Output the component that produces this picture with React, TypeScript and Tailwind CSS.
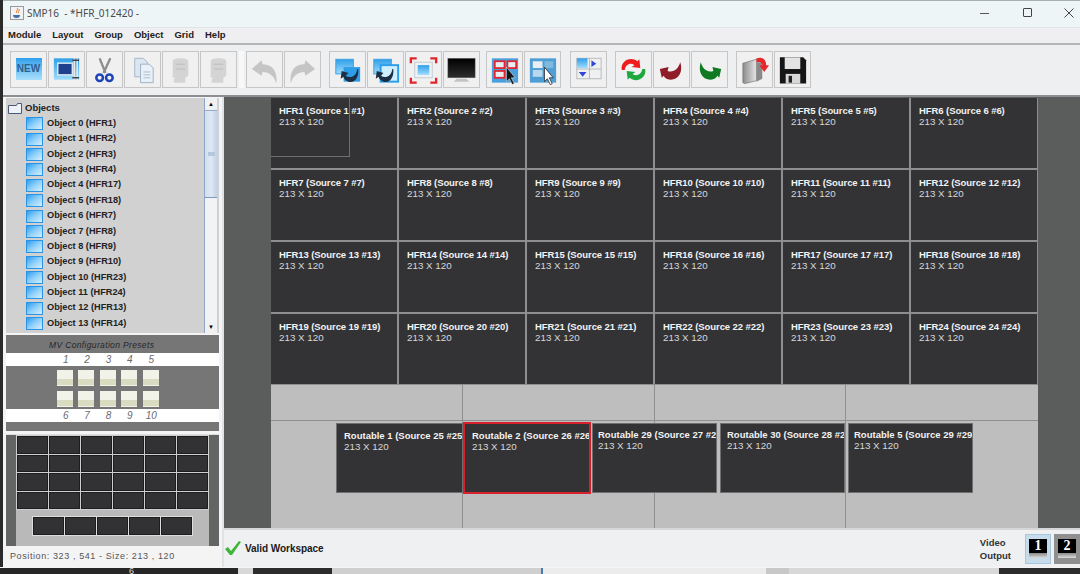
import React from "react";

const font = "[font-family:'Liberation_Sans',Arial,sans-serif]";

function Defs() {
  return (
    <svg className="absolute w-0 h-0" aria-hidden="true">
      <defs>
        <linearGradient id="blue" x1="0" y1="0" x2="0" y2="1">
          <stop offset="0" stopColor="#2f9fe8" />
          <stop offset="1" stopColor="#9fdcfb" />
        </linearGradient>
        <linearGradient id="gray" x1="0" y1="0" x2="1" y2="0">
          <stop offset="0" stopColor="#8a8a8a" />
          <stop offset="1" stopColor="#e8e8e8" />
        </linearGradient>
        <linearGradient id="mon" x1="0" y1="0" x2="0" y2="1">
          <stop offset="0" stopColor="#000" />
          <stop offset="1" stopColor="#2e2e2e" />
        </linearGradient>
      </defs>
    </svg>
  );
}

const Svg = ({ children }: { children: React.ReactNode }) => (
  <svg viewBox="0 0 36 36" className="w-[36px] h-[36px]">
    {children}
  </svg>
);

const darkArrow = "M12 25c5 3 11 1 12-7l1 0c1 9-4 15-10 13-3-1-5-3-5-5l-3 2 1-8 7 2z";

const Icons: Record<string, React.ReactNode> = {
  new: (
    <div className={`w-[26px] h-[22px] mb-[2px] bg-linear-to-b from-[#2c9fec] to-[#a8dffb] flex items-center justify-center text-[10px] font-bold text-[#2d5f8e] ${font}`}>
      NEW
    </div>
  ),
  edit: (
    <Svg>
      <rect x="5" y="6" width="26" height="22" fill="url(#blue)" />
      <rect x="9" y="11" width="15" height="12" fill="#1f3f8f" stroke="#d9e8f2" strokeWidth="1.5" />
      <path d="M26 6v22M29 6v22" stroke="#e8e8e8" strokeWidth="1.6" />
      <path d="M24 8h7M24 26h7" stroke="#444" strokeWidth="1.6" />
    </Svg>
  ),
  cut: (
    <Svg>
      <path d="M13 6l6 15M24 6l-7 15" stroke="#8d8d8d" strokeWidth="2.4" fill="none" />
      <circle cx="13" cy="26" r="3.4" fill="none" stroke="#1d45b8" strokeWidth="2.6" />
      <circle cx="23" cy="26" r="3.4" fill="none" stroke="#1d45b8" strokeWidth="2.6" />
    </Svg>
  ),
  copy: (
    <Svg>
      <path d="M10 6h9l4 4v15H10z" fill="#dbe6f0" stroke="#a5b5c5" />
      <path d="M16 12h9l4 4v15H16z" fill="#e9f0f7" stroke="#9fb2c5" />
      <path d="M19 20h7M19 23h7M19 26h7" stroke="#a9bccd" />
    </Svg>
  ),
  disA: (
    <Svg>
      <path d="M10 9c0-2 3-3 8-3s8 1 8 3v15l-3 2v5H11v-4l3-1h-4z" fill="#d4d4d4" />
      <path d="M13 12h10M13 17h10" stroke="#c4c4c4" strokeWidth="1.5" />
    </Svg>
  ),
  undo: (
    <Svg>
      <path d="M5 17l10-9 1 4c9 0 16 6 14 20-2-8-7-12-14-12l-1 4z" fill="#c5c5c5" />
    </Svg>
  ),
  redo: (
    <Svg>
      <path d="M31 17l-10-9-1 4c-9 0-16 6-14 20 2-8 7-12 14-12l1 4z" fill="#c5c5c5" />
    </Svg>
  ),
  front: (
    <Svg>
      <rect x="6" y="7" width="18" height="15" fill="url(#blue)" stroke="#3aa0e6" />
      <rect x="14" y="15" width="17" height="15" fill="#2e9ee6" />
      <path d={darkArrow} fill="#1d2f45" transform="translate(4 -1)" />
    </Svg>
  ),
  back: (
    <Svg>
      <rect x="6" y="7" width="18" height="15" fill="url(#blue)" stroke="#3aa0e6" />
      <rect x="13" y="13" width="18" height="17" fill="#cfeeff" stroke="#2e9ee6" strokeWidth="2" />
      <path d={darkArrow} fill="#1d2f45" transform="translate(1 -1)" />
    </Svg>
  ),
  fit: (
    <Svg>
      <path d="M5 11V6h6M31 11V6h-6M5 26v5h6M31 26v5h-6" fill="none" stroke="#e0262c" strokeWidth="2.4" />
      <rect x="9" y="10" width="18" height="16" fill="#eef2f4" stroke="#c4cad0" />
      <rect x="12" y="13" width="12" height="10" fill="url(#blue)" />
    </Svg>
  ),
  monitor: (
    <Svg>
      <rect x="4" y="6" width="28" height="20" fill="url(#mon)" stroke="#666" strokeWidth="0.5" />
      <path d="M13 27h10l3 3H10z" fill="#c3c3c3" />
    </Svg>
  ),
  selRed: (
    <Svg>
      <rect x="5" y="6" width="27" height="25" fill="#4aa0dc" />
      <rect x="8" y="9" width="10" height="7" fill="#e6eef4" stroke="#e2242c" strokeWidth="1.8" />
      <rect x="21" y="9" width="9" height="7" fill="#e6eef4" stroke="#e2242c" strokeWidth="1.8" />
      <rect x="8" y="19" width="10" height="7" fill="#e6eef4" stroke="#e2242c" strokeWidth="1.8" />
      <path d="M20 15l0 15 3-3 3 6 2-1-3-6 4 0z" fill="#151515" stroke="#fff" strokeWidth="0.5" />
    </Svg>
  ),
  selBlue: (
    <Svg>
      <rect x="5" y="6" width="27" height="25" fill="#4f9fd6" />
      <rect x="8" y="9" width="10" height="7" fill="#e8eef2" />
      <rect x="8" y="18" width="10" height="7" fill="#b9d8ec" />
      <rect x="20" y="9" width="9" height="7" fill="#7fb9de" />
      <path d="M20 15l0 15 3-3 3 6 2-1-3-6 4 0z" fill="#fff" stroke="#222" strokeWidth="0.8" />
    </Svg>
  ),
  layout: (
    <Svg>
      <rect x="6" y="6" width="25" height="21" fill="#eef0f2" stroke="#b9b9b9" />
      <path d="M19 6v21M6 17h25" stroke="#b9b9b9" />
      <rect x="6" y="6" width="11" height="10" fill="url(#blue)" />
      <path d="M21 8l5 3.5-5 3.5zM8 20h8l-4 5z" fill="#3246d8" />
    </Svg>
  ),
  sync: (
    <Svg>
      <path d="M6 18c-2-9 9-15 16-9l2-2 1 9-9-1 3-2c-4-3-9-1-10 5z" fill="#ee1c1c" />
      <path d="M30 17c2 9-9 15-16 9l-2 2-1-9 9 1-3 2c4 3 9 1 10-5z" fill="#1fa83e" />
    </Svg>
  ),
  down: (
    <Svg>
      <path d="M6 17l9-2-1 4c6 2 11-2 13-9 3 9-1 18-10 18-4 0-6-2-7-4l-2 2z" fill="#8f1c28" />
    </Svg>
  ),
  up: (
    <Svg>
      <path d="M30 17l-9-2 1 4c-6 2-11-2-13-9-3 9 1 18 10 18 4 0 6-2 7-4l2 2z" fill="#0f7a22" />
    </Svg>
  ),
  open: (
    <Svg>
      <path d="M6 11l14-4v22l-12 3-2-1z" fill="url(#gray)" stroke="#666" strokeWidth="0.6" />
      <path d="M20 10h6v17l-6 3z" fill="#8a8a8a" />
      <path d="M20 6c6-2 10 1 10 7h3l-5 7-5-7h3c0-2-2-4-6-3z" fill="#e8262a" />
    </Svg>
  ),
  save: (
    <Svg>
      <path d="M5 5h24l3 3v24H5z" fill="#161616" />
      <rect x="10" y="5" width="16" height="12" fill="#e4e4e4" />
      <rect x="11" y="22" width="15" height="10" fill="#d8d8d8" />
      <rect x="14" y="24" width="3.5" height="7" fill="#222" />
    </Svg>
  ),
};

const Btn = ({ icon }: { icon: string }) => (
  <div className="w-[37px] h-[37px] border border-[#c6c6c6] bg-[#f0f0f1] flex items-center justify-center shrink-0">
    {Icons[icon]}
  </div>
);

const Group = ({ icons, gap }: { icons: string[]; gap: string }) => (
  <div className={`flex gap-[1px] ${gap}`}>
    {icons.map((i, n) => (
      <Btn key={n} icon={i} />
    ))}
  </div>
);

const objects = ["HFR1", "HFR2", "HFR3", "HFR4", "HFR17", "HFR18", "HFR7", "HFR8", "HFR9", "HFR10", "HFR23", "HFR24", "HFR13", "HFR14"];

const ObjIcon = () => (
  <div className="w-[17px] h-[13px] mr-[4px] bg-linear-to-br from-[#1f9ef0] via-[#8ed0fa] to-[#d4eefe] border border-[#2a93e4] shrink-0" />
);

function Tree() {
  return (
    <div className="h-[235px] mx-[3px] bg-[#d1d1d2] flex overflow-hidden relative">
      <div className="flex-1 pl-[2px] pt-[3px] overflow-hidden">
        <div className="flex items-center h-[15px] text-[9.5px] font-bold text-[#222]">
          <svg viewBox="0 0 14 11" className="w-[14px] h-[11px] mr-[3px]">
            <path d="M0.5 2.5h8l1-2h4v10h-13z" fill="#eef1f7" stroke="#4a5a78" />
          </svg>
          Objects
        </div>
        {objects.map((o, i) => (
          <div key={i} className="flex items-center h-[15.4px] pl-[18px] text-[9.2px] font-bold text-[#222] whitespace-nowrap">
            <ObjIcon />
            Object {i} ({o})
          </div>
        ))}
        <div className="flex items-center h-[15.4px] pl-[18px]">
          <ObjIcon />
        </div>
      </div>
      <div className="w-[13px] mr-[2px] flex flex-col bg-[#f2f3f4] border-l border-[#8fa5c8] shrink-0">
        <div className="h-[13px] bg-[#f0f1f3] flex items-center justify-center text-[6px] text-black border-b border-[#9aaac4]">▲</div>
        <div className="h-[87px] bg-linear-to-r from-[#cfdfee] via-[#dfe9f4] to-[#bfd2e6] border-b border-[#7f96bd] flex items-center justify-center">
          <div className="w-[7px] h-[4px] bg-[#b6c7db]" />
        </div>
        <div className="flex-1" />
        <div className="h-[11px] bg-[#f0f1f3] flex items-center justify-center text-[6px] text-black">▼</div>
      </div>
    </div>
  );
}

const PresetBtn = () => (
  <div className="w-[16px] h-[16px] bg-[#f2f3e8] flex flex-col justify-end">
    <div className="h-[6px] mb-[1px] bg-[#d9dcc0]" />
  </div>
);

const NumRow = ({ nums }: { nums: number[] }) => (
  <div className="h-[13px] bg-white flex pl-[49px] text-[10px] italic text-[#6c6c6c]">
    {nums.map((n) => (
      <div key={n} className="w-[21.4px] text-center leading-[13px]">{n}</div>
    ))}
  </div>
);

function Presets() {
  return (
    <div className="mt-[2px] h-[96px] mx-[3px] bg-[#767676] flex flex-col">
      <div className="h-[18px] flex items-center pl-[43px] pt-[3px] text-[8.5px] italic text-[#262626] tracking-[0.35px] whitespace-nowrap">
        MV Configuration Presets
      </div>
      <NumRow nums={[1, 2, 3, 4, 5]} />
      <div className="h-[43px] pl-[51px] pt-[4px] flex flex-col gap-[5px]">
        {[0, 1].map((r) => (
          <div key={r} className="flex gap-[5.4px]">
            {[0, 1, 2, 3, 4].map((c) => (
              <PresetBtn key={c} />
            ))}
          </div>
        ))}
      </div>
      <NumRow nums={[6, 7, 8, 9, 10]} />
    </div>
  );
}

function MiniMap() {
  return (
    <div className="mt-[3px] h-[112px] mx-[3px] bg-[#636464] px-[5px] flex flex-col items-center border-t border-[#ddd]">
      <div className="w-[193px] grid grid-cols-6 gap-[1px] bg-[#cfcfcf] p-[1px]">
        {Array.from({ length: 24 }).map((_, i) => (
          <div key={i} className="h-[17.5px] bg-[#323234] border border-[#1d1d1d]" />
        ))}
      </div>
      <div className="w-[193px] h-[36px] bg-[#b9b9b9] flex justify-center pt-[7px] gap-[1px]">
        {[0, 1, 2, 3, 4].map((i) => (
          <div key={i} className="w-[31px] h-[18px] bg-[#323234] border border-[#1d1d1d] outline outline-[#ddd]" />
        ))}
      </div>
    </div>
  );
}

const Cell = ({ title, first = false }: { title: string; first?: boolean }) => (
  <div className="h-[70px] bg-[#333335] relative pl-[8px] pt-[7px] text-[9.8px] leading-[11px] overflow-hidden">
    {first && <div className="absolute left-0 top-0 w-[79px] h-[59px] border-r border-b border-[#6e6e6e]" />}
    <div className="font-bold text-[9.5px] text-[#f2f2f2] tracking-[-0.08px] whitespace-nowrap relative">{title}</div>
    <div className="text-[#d8d8d8] relative">213 X 120</div>
  </div>
);

const routables = [
  { t: "Routable 1 (Source 25 #25)", c: "w-[127px] h-[70px] border border-[#6f6f6f] pl-[7px] pt-[6px]" },
  { t: "Routable 2 (Source 26 #26)", c: "w-[128px] h-[72px] -mt-[1px] border-2 border-[#d8202c] pl-[7px] pt-[6px]" },
  { t: "Routable 29 (Source 27 #27)", c: "w-[125px] h-[70px] ml-[1px] border border-[#6f6f6f] pl-[5px] pt-[5px]" },
  { t: "Routable 30 (Source 28 #28)", c: "w-[125px] h-[70px] ml-[3px] border border-[#6f6f6f] pl-[6px] pt-[5px]" },
  { t: "Routable 5 (Source 29 #29)", c: "w-[125px] h-[70px] ml-[3px] border border-[#6f6f6f] pl-[5px] pt-[5px]" },
];

function Canvas() {
  return (
    <div className="h-[433px] bg-[#5b5c5c] pl-[47px] pt-[1px] border-b-2 border-[#d6d6d6]">
      <div className="w-[767px] bg-[#8e8e8e] grid grid-cols-[repeat(6,126px)] gap-[2px] pb-[1px]">
        {Array.from({ length: 24 }).map((_, i) => (
          <Cell key={i} first={i === 0} title={`HFR${i + 1} (Source ${i + 1} #${i + 1})`} />
        ))}
      </div>
      <div className="w-[767px] h-[143px] bg-[#bebebe] relative grid grid-cols-4 grid-rows-[36px_107px]">
        {Array.from({ length: 8 }).map((_, i) => (
          <div key={i} className={`${i % 4 < 3 ? "border-r" : ""} ${i < 4 ? "border-b" : ""} border-[#8f8f8f]`} />
        ))}
        <div className="absolute left-[65px] top-[38px] flex items-start">
          {routables.map((r, i) => (
            <div key={i} className={`${r.c} bg-[#333335] text-[9.8px] leading-[11px] overflow-hidden`}>
              <div className="font-bold text-[9.5px] text-[#f2f2f2] whitespace-nowrap">{r.t}</div>
              <div className="text-[#d8d8d8]">213 X 120</div>
            </div>
          ))}
        </div>
      </div>
    </div>
  );
}

const OutBtn = ({ n, active }: { n: number; active?: boolean }) => (
  <div className={`w-[26px] h-[30px] flex items-center justify-center ${active ? "bg-[#c6dceb] border border-[#a7c6de]" : "bg-[#8f8f8f]"}`}>
    <div className="flex flex-col items-center">
      <div className="w-[18px] h-[14px] bg-black text-white text-[14px] font-bold leading-[14px] text-center [font-family:'Liberation_Serif',serif]">{n}</div>
      <div className="w-[18px] h-[5px] bg-linear-to-b from-[#8a8a8a] to-[#dcdcdc]" />
    </div>
  </div>
);

export default function App() {
  return (
    <div className={`w-[1080px] h-[574px] overflow-hidden bg-[#2a2a2a] flex flex-col ${font}`}>
      <Defs />
      <div className="h-[568px] pl-[3px] flex flex-col shrink-0 border-b border-[#f5f5f5]">
        <div className="h-[28px] pb-[2px] bg-[#eef5f7] border-t border-[#a9b0b2] border-b border-b-[#dfe4e6] flex items-center shrink-0">
          <svg viewBox="0 0 14 14" className="w-[14px] h-[14px] ml-[7px] mr-[3px]">
            <rect x="0.5" y="0.5" width="13" height="13" fill="#f2f2f2" stroke="#9a9a9a" />
            <path d="M7 2c2 2-2 3 0 5M9 3c1 2-2 3 0 4" stroke="#e8731a" fill="none" />
            <path d="M3 9h7c0 2-1 3-3.500 3S3 11 3 9z" fill="#3f6fa8" />
          </svg>
          <span className="text-[10px] text-[#4a4a4a] [font-family:'Noto_Sans',sans-serif] whitespace-pre">SMP16  - *HFR_012420 -</span>
          <div className="ml-auto flex items-center">
            <svg viewBox="0 0 12 12" className="w-[12px] h-[12px] mr-[31px] stroke-[#555]"><path d="M1 6.500h9" /></svg>
            <svg viewBox="0 0 12 12" className="w-[12px] h-[12px] mr-[29px] stroke-[#444] fill-none"><rect x="1.500" y="1.500" width="8" height="8" rx="0.500" /></svg>
            <svg viewBox="0 0 12 12" className="w-[12px] h-[12px] mr-[5px] stroke-[#444]"><path d="M1.500 1.500l9 9M10.500 1.500l-9 9" /></svg>
          </div>
        </div>
        <div className="h-[17px] bg-[#efeff1] border-b-2 border-[#b2b6b6] flex items-center pl-[5px] gap-[11px] text-[9.5px] font-bold text-[#1c1c1c] shrink-0">
          {["Module", "Layout", "Group", "Object", "Grid", "Help"].map((m) => (
            <span key={m}>{m}</span>
          ))}
        </div>
        <div className="h-[52px] bg-[#eeeff1] border-b-2 border-[#8b8e92] flex items-start pt-[6px] pl-[7px] shrink-0">
          <Group gap="" icons={["new", "edit", "cut", "copy", "disA", "disA"]} />
          <div className="w-[5px] h-[37px] ml-[2px] mr-[2px] bg-[#f8f8f9]" />
          <Group gap="" icons={["undo", "redo"]} />
          <Group gap="ml-[8px]" icons={["front", "back", "fit", "monitor"]} />
          <Group gap="ml-[6px]" icons={["selRed", "selBlue"]} />
          <Group gap="ml-[9px]" icons={["layout"]} />
          <Group gap="ml-[8px]" icons={["sync", "down", "up"]} />
          <Group gap="ml-[8px]" icons={["open", "save"]} />
        </div>
        <div className="flex-1 flex min-h-0">
          <div className="w-[221px] bg-[#f4f4f5] border-r-2 border-[#dfe3e8] flex flex-col shrink-0 pt-[1px]">
            <Tree />
            <Presets />
            <MiniMap />
            <div className="flex-1 flex items-center pl-[7px] pt-[1px] text-[9px] text-[#555] tracking-[0.6px] whitespace-nowrap">
              Position: 323 , 541 - Size: 213 , 120
            </div>
          </div>
          <div className="flex-1 flex flex-col min-w-0">
            <Canvas />
            <div className="flex-1 bg-[#eff0f2] flex items-center relative">
              <svg viewBox="0 0 18 16" className="w-[18px] h-[16px] mr-[3px] -mt-[2px]">
                <path d="M1 9l3-2 3 4 8-10 2 1-9 13H6z" fill="#3fb53a" />
              </svg>
              <span className="text-[10px] font-bold text-[#1a1a1a] tracking-[-0.05px]">Valid Workspace</span>
              <div className="ml-auto flex items-center">
                <div className="text-[9.5px] font-bold leading-[13px] text-[#333] mr-[14px]">
                  Video<br />Output
                </div>
                <OutBtn n={1} active />
                <div className="w-[3px]" />
                <OutBtn n={2} />
              </div>
            </div>
          </div>
        </div>
      </div>
      <div className="flex-1 flex overflow-hidden">
        <div className="w-[238px] bg-[#262626] text-[#ddd] text-[9px] leading-[6px] pl-[129px]">6</div>
        <div className="w-[15px] bg-[#d8d8d8]" />
        <div className="w-[79px] bg-[#2c2c2c]" />
        <div className="w-[211px] bg-[#cfcfcf] border-r-2 border-[#4a78b0]" />
        <div className="w-[223px] bg-[#ececec]" />
        <div className="w-[23px] bg-[#c8c8c8]" />
        <div className="w-[210px] bg-[#d8d8d8]" />
        <div className="flex-1 bg-[#2c2c2c]" />
      </div>
    </div>
  );
}
